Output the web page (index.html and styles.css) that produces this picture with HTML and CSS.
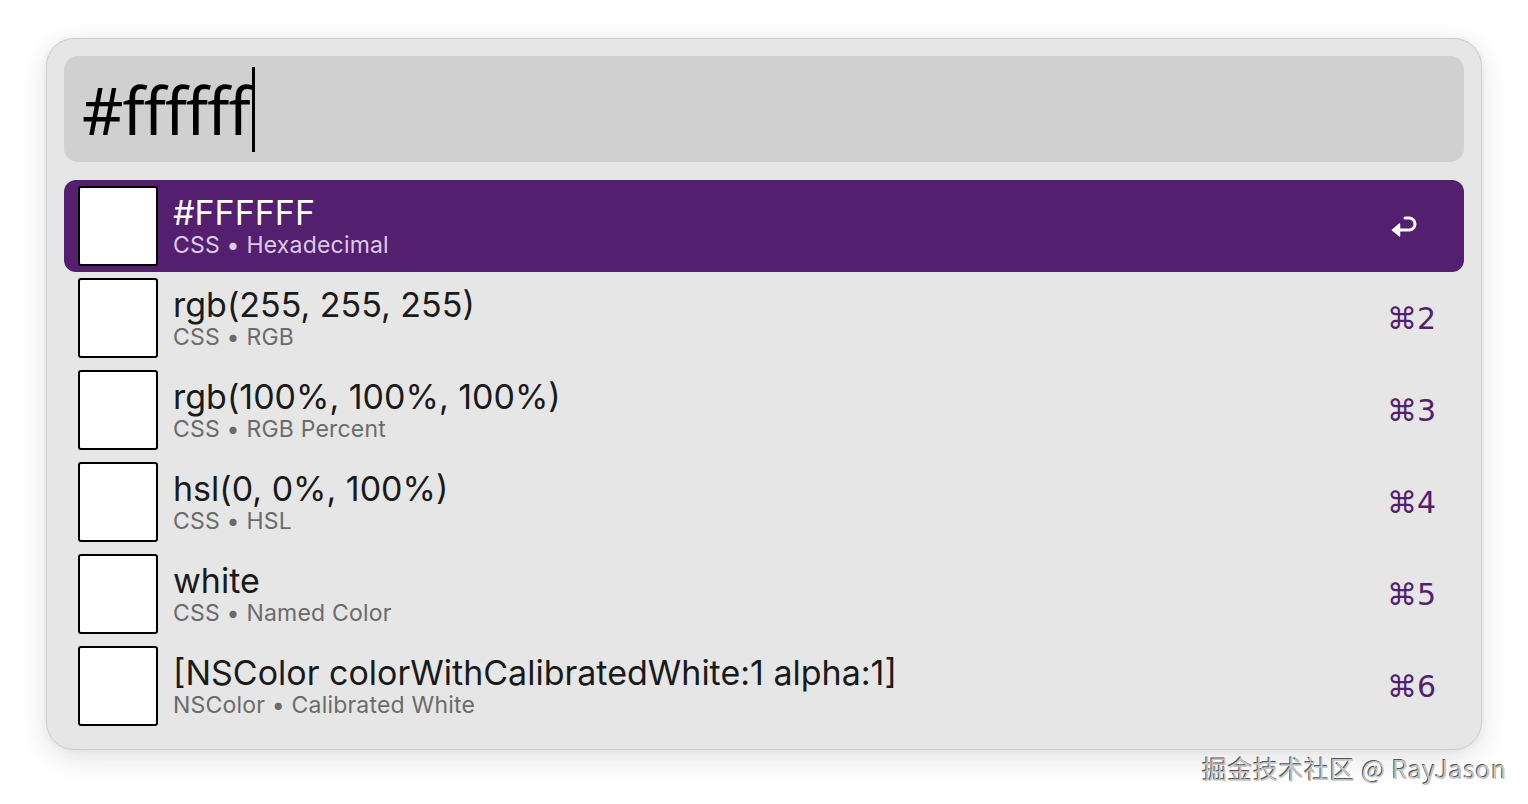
FILE: index.html
```html
<!DOCTYPE html>
<html lang="en">
<head>
<meta charset="utf-8">
<title>Color picker</title>
<link rel="stylesheet" href="styles.css">
</head>
<body>
<div class="stage">
  <div class="window">
    <div class="search">
      <span class="query">#ffffff</span><span class="caret"></span>
    </div>
    <ul class="results">
      <li class="row selected">
        <span class="swatch"></span>
        <div class="text">
          <div class="title">#FFFFFF</div>
          <div class="sub">CSS • Hexadecimal</div>
        </div>
        <span class="key">
          <svg class="enter" width="30" height="26" viewBox="0 0 30 26" aria-hidden="true">
            <path d="M4 17 H19 a6 6 0 0 0 0 -12 H15" fill="none" stroke="#fff" stroke-width="3" stroke-linecap="round" stroke-linejoin="round"/>
            <path d="M2.5 17 L9.5 11 L9.5 23 Z" fill="#fff" stroke="#fff" stroke-width="1.5" stroke-linejoin="round"/>
          </svg>
        </span>
      </li>
      <li class="row">
        <span class="swatch"></span>
        <div class="text">
          <div class="title">rgb(255, 255, 255)</div>
          <div class="sub">CSS • RGB</div>
        </div>
        <span class="key">⌘2</span>
      </li>
      <li class="row">
        <span class="swatch"></span>
        <div class="text">
          <div class="title">rgb(100%, 100%, 100%)</div>
          <div class="sub">CSS • RGB Percent</div>
        </div>
        <span class="key">⌘3</span>
      </li>
      <li class="row">
        <span class="swatch"></span>
        <div class="text">
          <div class="title">hsl(0, 0%, 100%)</div>
          <div class="sub">CSS • HSL</div>
        </div>
        <span class="key">⌘4</span>
      </li>
      <li class="row">
        <span class="swatch"></span>
        <div class="text">
          <div class="title">white</div>
          <div class="sub">CSS • Named Color</div>
        </div>
        <span class="key">⌘5</span>
      </li>
      <li class="row">
        <span class="swatch"></span>
        <div class="text">
          <div class="title">[NSColor colorWithCalibratedWhite:1 alpha:1]</div>
          <div class="sub">NSColor • Calibrated White</div>
        </div>
        <span class="key">⌘6</span>
      </li>
    </ul>
  </div>
  <div class="watermark">掘金技术社区 @ RayJason</div>
</div>
</body>
</html>
```
FILE: styles.css
```css
* { box-sizing: border-box; }
html, body {
  margin: 0;
  padding: 0;
  background: #ffffff;
  width: 1528px;
  height: 804px;
  overflow: hidden;
}
body {
  font-family: Inter, "Noto Sans", "Liberation Sans", sans-serif;
}
.stage {
  position: relative;
  width: 1528px;
  height: 804px;
  padding: 38px 46px 0 46px;
}
.window {
  width: 1436px;
  height: 712px;
  padding: 17px;
  border-radius: 28px;
  background: #e6e6e6;
  border: 1px solid #cdcdcd;
  box-shadow: 0 8px 28px rgba(0, 0, 0, 0.12), 0 0 6px rgba(0, 0, 0, 0.05);
  display: flex;
  flex-direction: column;
  gap: 18px;
}
.search {
  height: 106px;
  border-radius: 14px;
  background: #d0d0d0;
  display: flex;
  align-items: center;
  padding-left: 18px;
}
.query {
  font-family: "Noto Sans", Inter, sans-serif;
  font-size: 66px;
  color: #000;
  letter-spacing: -1px;
  line-height: 1;
  transform: scaleX(0.975);
  transform-origin: left center;
  margin-right: -2px;
}
.caret {
  width: 3px;
  height: 85px;
  background: #000;
}
.results {
  list-style: none;
  margin: 0;
  padding: 0;
  display: flex;
  flex-direction: column;
}
.row {
  height: 92px;
  border-radius: 12px;
  display: flex;
  align-items: center;
  padding: 0 28px 0 14px;
  gap: 15px;
}
.row.selected {
  background: #541f6f;
}
.swatch {
  flex: none;
  width: 80px;
  height: 80px;
  background: #ffffff;
  border: 2px solid #000;
  border-radius: 3px;
}
.text {
  flex: 1;
  align-self: flex-start;
  display: flex;
  flex-direction: column;
  padding-top: 13px;
}
.title {
  font-size: 34px;
  line-height: 39px;
  color: #1a1a1a;
  letter-spacing: 0;
}
.sub {
  font-size: 23px;
  line-height: 26px;
  color: #6b6b6b;
  letter-spacing: 0.2px;
}
.selected .title { color: #ffffff; }
.selected .sub { color: #dccbe8; }
.key {
  font-size: 30px;
  color: #541f6f;
  font-family: "DejaVu Sans", Inter, sans-serif;
  display: flex;
  align-items: center;
}
.enter {
  display: block;
  margin-right: 16px;
}
.watermark {
  position: absolute;
  right: 21px;
  top: 750px;
  font-size: 25px;
  color: #c4c4c4;
  font-family: "Noto Sans CJK SC", "Noto Sans", sans-serif;
  text-shadow: -1px -1px 0 #555, 1px 1px 0 #fff;
  letter-spacing: 0.5px;
}
```
